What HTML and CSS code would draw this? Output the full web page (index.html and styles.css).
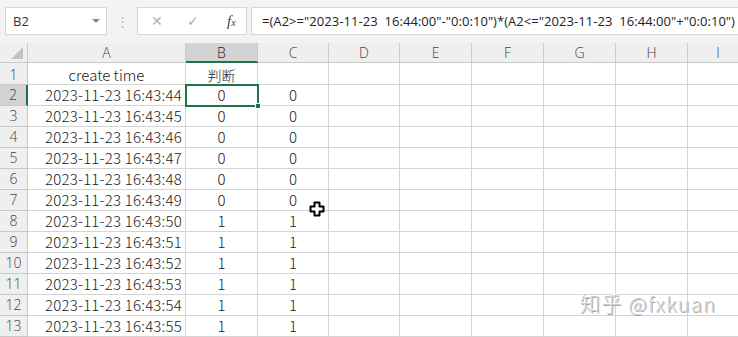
FILE: index.html
```html
<!DOCTYPE html>
<html lang="zh-CN">
<head>
    <meta charset="UTF-8">
    <title>Sheet</title>
    <link rel="stylesheet" href="styles.css">
</head>
<body>
    <div class="app">
        <div class="toolbar">
            <div class="name-box">
                <span>B2</span>
                <span class="caret"></span>
            </div>
            <div class="grip">⋮</div>
            <div class="fx-box">
                <span class="fx-icon cancel">✕</span>
                <span class="fx-icon ok">✓</span>
                <span class="fx-icon fx"><i>f<small>x</small></i></span>
            </div>
            <div class="formula">=(A2&gt;="2023-11-23&nbsp; 16:44:00"-"0:0:10")*(A2&lt;="2023-11-23&nbsp; 16:44:00"+"0:0:10")</div>
        </div>

        <div class="sheet">
            <div class="row head">
                <div class="cell rh corner"><span class="tri"></span></div>
                <div class="cell c-a">A</div>
                <div class="cell c-b active">B</div>
                <div class="cell c-c">C</div>
                <div class="cell c-d">D</div>
                <div class="cell c-e">E</div>
                <div class="cell c-f">F</div>
                <div class="cell c-g">G</div>
                <div class="cell c-h">H</div>
                <div class="cell c-i">I</div>
            </div>
            <div class="row first">
                <div class="cell rh">1</div>
                <div class="cell c-a center">create time</div>
                <div class="cell c-b center cjk">判断</div>
                <div class="cell c-c"></div>
                <div class="cell c-d"></div>
                <div class="cell c-e"></div>
                <div class="cell c-f"></div>
                <div class="cell c-g"></div>
                <div class="cell c-h"></div>
                <div class="cell c-i"></div>
            </div>
            <div class="row">
                <div class="cell rh active">2</div>
                <div class="cell c-a num">2023-11-23 16:43:44</div>
                <div class="cell c-b center selected">0<span class="handle"></span></div>
                <div class="cell c-c center">0</div>
                <div class="cell c-d"></div><div class="cell c-e"></div><div class="cell c-f"></div><div class="cell c-g"></div><div class="cell c-h"></div><div class="cell c-i"></div>
            </div>
            <div class="row">
                <div class="cell rh">3</div>
                <div class="cell c-a num">2023-11-23 16:43:45</div>
                <div class="cell c-b center">0</div>
                <div class="cell c-c center">0</div>
                <div class="cell c-d"></div><div class="cell c-e"></div><div class="cell c-f"></div><div class="cell c-g"></div><div class="cell c-h"></div><div class="cell c-i"></div>
            </div>
            <div class="row">
                <div class="cell rh">4</div>
                <div class="cell c-a num">2023-11-23 16:43:46</div>
                <div class="cell c-b center">0</div>
                <div class="cell c-c center">0</div>
                <div class="cell c-d"></div><div class="cell c-e"></div><div class="cell c-f"></div><div class="cell c-g"></div><div class="cell c-h"></div><div class="cell c-i"></div>
            </div>
            <div class="row">
                <div class="cell rh">5</div>
                <div class="cell c-a num">2023-11-23 16:43:47</div>
                <div class="cell c-b center">0</div>
                <div class="cell c-c center">0</div>
                <div class="cell c-d"></div><div class="cell c-e"></div><div class="cell c-f"></div><div class="cell c-g"></div><div class="cell c-h"></div><div class="cell c-i"></div>
            </div>
            <div class="row">
                <div class="cell rh">6</div>
                <div class="cell c-a num">2023-11-23 16:43:48</div>
                <div class="cell c-b center">0</div>
                <div class="cell c-c center">0</div>
                <div class="cell c-d"></div><div class="cell c-e"></div><div class="cell c-f"></div><div class="cell c-g"></div><div class="cell c-h"></div><div class="cell c-i"></div>
            </div>
            <div class="row">
                <div class="cell rh">7</div>
                <div class="cell c-a num">2023-11-23 16:43:49</div>
                <div class="cell c-b center">0</div>
                <div class="cell c-c center">0</div>
                <div class="cell c-d"></div><div class="cell c-e"></div><div class="cell c-f"></div><div class="cell c-g"></div><div class="cell c-h"></div><div class="cell c-i"></div>
            </div>
            <div class="row">
                <div class="cell rh">8</div>
                <div class="cell c-a num">2023-11-23 16:43:50</div>
                <div class="cell c-b center">1</div>
                <div class="cell c-c center">1</div>
                <div class="cell c-d"></div><div class="cell c-e"></div><div class="cell c-f"></div><div class="cell c-g"></div><div class="cell c-h"></div><div class="cell c-i"></div>
            </div>
            <div class="row">
                <div class="cell rh">9</div>
                <div class="cell c-a num">2023-11-23 16:43:51</div>
                <div class="cell c-b center">1</div>
                <div class="cell c-c center">1</div>
                <div class="cell c-d"></div><div class="cell c-e"></div><div class="cell c-f"></div><div class="cell c-g"></div><div class="cell c-h"></div><div class="cell c-i"></div>
            </div>
            <div class="row">
                <div class="cell rh">10</div>
                <div class="cell c-a num">2023-11-23 16:43:52</div>
                <div class="cell c-b center">1</div>
                <div class="cell c-c center">1</div>
                <div class="cell c-d"></div><div class="cell c-e"></div><div class="cell c-f"></div><div class="cell c-g"></div><div class="cell c-h"></div><div class="cell c-i"></div>
            </div>
            <div class="row">
                <div class="cell rh">11</div>
                <div class="cell c-a num">2023-11-23 16:43:53</div>
                <div class="cell c-b center">1</div>
                <div class="cell c-c center">1</div>
                <div class="cell c-d"></div><div class="cell c-e"></div><div class="cell c-f"></div><div class="cell c-g"></div><div class="cell c-h"></div><div class="cell c-i"></div>
            </div>
            <div class="row">
                <div class="cell rh">12</div>
                <div class="cell c-a num">2023-11-23 16:43:54</div>
                <div class="cell c-b center">1</div>
                <div class="cell c-c center">1</div>
                <div class="cell c-d"></div><div class="cell c-e"></div><div class="cell c-f"></div><div class="cell c-g"></div><div class="cell c-h"></div><div class="cell c-i"></div>
            </div>
            <div class="row">
                <div class="cell rh">13</div>
                <div class="cell c-a num">2023-11-23 16:43:55</div>
                <div class="cell c-b center">1</div>
                <div class="cell c-c center">1</div>
                <div class="cell c-d"></div><div class="cell c-e"></div><div class="cell c-f"></div><div class="cell c-g"></div><div class="cell c-h"></div><div class="cell c-i"></div>
            </div>

            <!-- mouse pointer over the sheet -->
            <svg class="pointer" width="16" height="16" viewBox="0 0 16 16">
                <path d="M5.5 1.5h5v4h4v5h-4v4h-5v-4h-4v-5h4z" fill="#fff" stroke="#000" stroke-width="2" stroke-linejoin="round"/>
            </svg>

            <div class="watermark">知乎 @fxkuan</div>
        </div>
    </div>
</body>
</html>
```

FILE: styles.css
```css
/* Excel-like sheet */
* {
    margin: 0;
    padding: 0;
    box-sizing: border-box;
}

body {
    background: #fff;
    font-family: "Noto Sans CJK SC", "Noto Sans", sans-serif;
    color: #222;
    overflow: hidden;
}

.app {
    width: 738px;
    height: 337px;
    overflow: hidden;
}

/* toolbar */
.toolbar {
    height: 43px;
    background: #f3f3f3;
    display: flex;
    align-items: flex-start;
    padding-top: 7px;
    padding-left: 5px;
}

.name-box {
    width: 102px;
    height: 28px;
    background: #fff;
    border: 1px solid #d6d6d6;
    display: flex;
    align-items: center;
    justify-content: space-between;
    padding: 0 6px 0 7px;
    font-family: "Open Sans", "Noto Sans", sans-serif;
    font-size: 13px;
    color: #333;
}

.caret {
    width: 0;
    height: 0;
    border-left: 4px solid transparent;
    border-right: 4px solid transparent;
    border-top: 4px solid #888;
}

.grip {
    width: 30px;
    text-align: center;
    color: #b8b8b8;
    font-size: 13px;
    line-height: 28px;
}

.fx-box {
    width: 110px;
    height: 28px;
    background: #fff;
    border: 1px solid #d6d6d6;
    display: flex;
    align-items: center;
    padding-left: 13px;
}

.fx-icon {
    color: #b0b0b0;
    font-family: "DejaVu Sans", sans-serif;
    font-size: 14px;
}

.cancel {
    width: 36px;
}

.ok {
    width: 40px;
}

.fx {
    color: #444;
    font-family: "Liberation Serif", serif;
    font-size: 15px;
}

.fx small {
    font-size: 10px;
}

.formula {
    flex: 1;
    height: 28px;
    margin-left: 4px;
    background: #fff;
    border: 1px solid #d6d6d6;
    border-right: none;
    padding-left: 10px;
    font-family: "Open Sans", "Noto Sans", sans-serif;
    font-size: 13px;
    letter-spacing: 0.05px;
    line-height: 26px;
    color: #222;
    white-space: nowrap;
    overflow: hidden;
}

/* grid */
.sheet {
    position: relative;
}

.row {
    display: flex;
    height: 21px;
}

.row.head {
    height: 20px;
    background: #efefef;
}

.row.first {
    height: 22px;
}

.cell {
    flex: none;
    border-right: 1px solid #d4d4d4;
    border-bottom: 1px solid #d4d4d4;
    font-size: 15px;
    font-weight: 300;
    line-height: 20px;
    white-space: nowrap;
    overflow: hidden;
}

.head .cell {
    text-align: center;
    color: #444;
    font-family: "Open Sans", "Noto Sans", sans-serif;
    font-size: 14px;
    line-height: 19px;
    border-color: #c9c9c9;
}

.head .cell.active {
    background: #d3d3d3;
    border-bottom: 2px solid #217346;
    color: #222;
}

.rh {
    width: 28px;
    background: #efefef;
    border-color: #c9c9c9;
    text-align: center;
    color: #444;
    font-family: "Open Sans", "Noto Sans", sans-serif;
    font-size: 14px;
}

.rh.active {
    background: #d3d3d3;
    border-right: 2px solid #217346;
}

.corner {
    position: relative;
}

.tri {
    position: absolute;
    right: 4px;
    bottom: 3px;
    width: 0;
    height: 0;
    border-left: 12px solid transparent;
    border-bottom: 12px solid #c2c2c2;
}

.c-a { width: 158px; }
.c-b { width: 72px; }
.c-c { width: 71px; }
.c-d { width: 71px; }
.c-e { width: 72px; }
.c-f { width: 72px; }
.c-g { width: 72px; }
.c-h { width: 72px; }
.c-i { width: 60px; border-right: none; }

.center {
    text-align: center;
}

.first .cell {
    line-height: 24px;
}

.first .rh {
    line-height: 23px;
}

.cjk {
    font-family: "Noto Sans CJK SC", sans-serif;
    font-size: 14px;
}

.num {
    text-align: right;
    padding-right: 3px;
    letter-spacing: 0.2px;
}

.selected {
    position: relative;
    overflow: visible;
    outline: 2px solid #217346;
    outline-offset: -1px;
    z-index: 2;
}

.handle {
    position: absolute;
    right: -4px;
    bottom: -4px;
    width: 6px;
    height: 6px;
    background: #217346;
    border: 1px solid #fff;
}

.pointer {
    position: absolute;
    left: 309px;
    top: 158px;
}

.watermark {
    position: absolute;
    left: 580px;
    top: 246px;
    font-family: "Noto Sans CJK SC", sans-serif;
    font-size: 20px;
    font-weight: 300;
    color: #cfcfcf;
    text-shadow: -1px -1px 0 #fff, 1px 1px 0 #a8a8a8;
    letter-spacing: 1.4px;
}
```
